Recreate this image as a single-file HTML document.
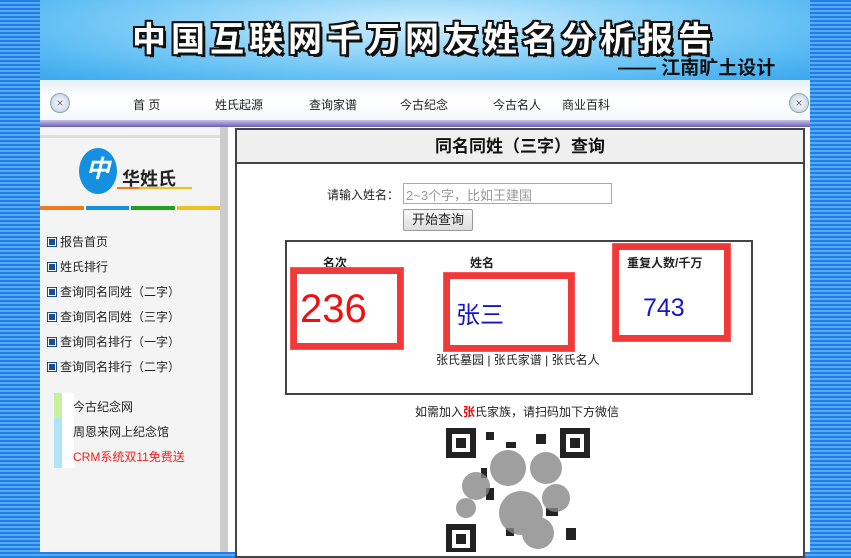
<!DOCTYPE html>
<html><head><meta charset="utf-8"><style>
*{margin:0;padding:0;box-sizing:border-box}
body{width:851px;height:552px;overflow:hidden;position:relative;font-family:"Liberation Sans","Noto Sans CJK SC",sans-serif;font-size:12px;color:#222;
background:repeating-linear-gradient(180deg,#1e7fe6 0 2px,#5aa8f0 2px 4px)}
.a{position:absolute}
#hdr{left:40px;top:0;width:770px;height:80px;background:radial-gradient(ellipse at 50% 30%,#cfeefe,#62c0f4 70%,#3aa7ee)}
#title{left:132px;top:12px;font-size:34px;font-weight:bold;color:#fff;letter-spacing:5px;font-family:"WenQuanYi Zen Hei","Noto Sans CJK SC",sans-serif;
text-shadow:2px 0 #111,-2px 0 #111,0 2px #111,0 -2px #111,2px 2px #111,-2px -2px #111,2px -2px #111,-2px 2px #111,3px 3px #111}
#sub{left:618px;top:53px;font-size:19px;font-weight:bold;color:#111}
#nav{left:40px;top:80px;width:770px;height:42px;background:linear-gradient(#e6eef6,#fff 40%,#f4f7fa)}
#nav span{position:absolute;top:16px;font-size:12px;color:#222}
.x{width:20px;height:20px;border-radius:50%;border:1px solid #8aa;background:radial-gradient(#fff,#b8c8e0);font-size:12px;text-align:center;line-height:18px;color:#668}
#pb{left:40px;top:120px;width:770px;height:7px;background:linear-gradient(#c9c3ea,#6a5fb8)}
#side{left:40px;top:127px;width:180px;height:425px;background:#f4f4f4}
#sb{left:220px;top:127px;width:8px;height:425px;background:#ccc}
#wh{left:228px;top:127px;width:582px;height:425px;background:#fff}
.m{position:absolute;left:48px;font-size:12px;color:#222}
.m b{display:inline-block;width:8px;height:8px;background:#1a4d8f;border:1px solid #fff;outline:1px solid #1a4d8f;margin-right:4px;vertical-align:0}
#main{left:235px;top:128px;width:570px;height:430px;border:2px solid #444;background:#fff}
#mh{left:237px;top:130px;width:566px;height:34px;background:#efefef;border-bottom:2px solid #444;text-align:center;font-size:17px;font-weight:bold;line-height:34px;color:#111}
.rb{position:absolute;border:6px solid #f03a3a;outline:1px solid #f55}
</style></head><body>
<div class="a" id="hdr"></div>
<div class="a" id="title">中国互联网千万网友姓名分析报告</div>
<div class="a" id="sub">—— 江南旷土设计</div>
<div class="a" id="nav">
<div class="a x" style="left:10px;top:13px">×</div><div class="a x" style="left:749px;top:13px">×</div>
<span style="left:93px">首 页</span><span style="left:175px">姓氏起源</span><span style="left:269px">查询家谱</span><span style="left:360px">今古纪念</span><span style="left:453px">今古名人</span><span style="left:522px">商业百科</span>
</div>
<div class="a" style="left:100px;top:121px;width:640px;height:1px;background:#889"></div>
<div class="a" id="pb"></div>
<div class="a" id="side"></div>
<div class="a" style="left:40px;top:135px;width:180px;height:3px;background:#ddd"></div>
<div class="a" id="sb"></div>
<div class="a" id="wh"></div>
<div class="a" style="left:79px;top:148px;width:38px;height:46px;border-radius:50%;background:#1590e0;color:#fff;font-weight:bold;font-style:italic;font-size:24px;text-align:center;line-height:44px">中</div>
<div class="a" style="left:122px;top:165px;font-size:18px;font-weight:bold;color:#222">华姓氏</div>
<div class="a" style="left:117px;top:187px;width:75px;height:2px;background:linear-gradient(90deg,#f07a1a 30%,#f0c020 30%)"></div>
<div class="a" style="left:40px;top:206px;width:44px;height:4px;background:#f07a1a"></div>
<div class="a" style="left:86px;top:206px;width:43px;height:4px;background:#1590e0"></div>
<div class="a" style="left:131px;top:206px;width:44px;height:4px;background:#22a022"></div>
<div class="a" style="left:177px;top:206px;width:43px;height:4px;background:#f0c020"></div>
<div class="m" style="top:233px"><b></b>报告首页</div>
<div class="m" style="top:258px"><b></b>姓氏排行</div>
<div class="m" style="top:283px"><b></b>查询同名同姓（二字）</div>
<div class="m" style="top:308px"><b></b>查询同名同姓（三字）</div>
<div class="m" style="top:333px"><b></b>查询同名排行（一字）</div>
<div class="m" style="top:358px"><b></b>查询同名排行（二字）</div>
<div class="a" style="left:54px;top:393px;width:8px;height:25px;background:#c8f0a0"></div>
<div class="a" style="left:54px;top:418px;width:8px;height:50px;background:#b0e4f8"></div>
<div class="a" style="left:62px;top:393px;width:12px;height:75px;background:#fff"></div>
<div class="a" style="left:73px;top:398px;color:#222">今古纪念网</div>
<div class="a" style="left:73px;top:423px;color:#222">周恩来网上纪念馆</div>
<div class="a" style="left:73px;top:448px;color:#f02020">CRM系统双11免费送</div>
<div class="a" id="main"></div>
<div class="a" id="mh">同名同姓（三字）查询</div>
<div class="a" style="left:327px;top:186px">请输入姓名：</div>
<div class="a" style="left:403px;top:183px;width:209px;height:21px;border:1px solid #aaa;color:#999;font-size:13px;padding:1px 2px">2~3个字，比如王建国</div>
<div class="a" style="left:403px;top:209px;width:70px;height:22px;border:1px solid #999;background:linear-gradient(#f8f8f8,#ddd);font-size:13px;text-align:center;line-height:20px;border-radius:2px">开始查询</div>
<div class="a" style="left:285px;top:240px;width:468px;height:155px;border:2px solid #444"></div>
<div class="a" style="left:323px;top:254px;font-weight:bold;font-size:12px">名次</div>
<div class="a" style="left:470px;top:254px;font-weight:bold;font-size:12px">姓名</div>
<div class="a" style="left:627px;top:254px;font-weight:bold;font-size:12px">重复人数/千万</div>
<div class="rb" style="left:291px;top:268px;width:112px;height:81px"></div>
<div class="rb" style="left:444px;top:273px;width:130px;height:78px"></div>
<div class="rb" style="left:613px;top:244px;width:117px;height:97px"></div>
<div class="a" style="left:300px;top:287px;font-size:40px;color:#f01010">236</div>
<div class="a" style="left:456px;top:295px;font-size:24px;color:#1515cc">张三</div>
<div class="a" style="left:643px;top:294px;font-size:25px;color:#1515cc">743</div>
<div class="a" style="left:436px;top:351px">张氏墓园 | 张氏家谱 | 张氏名人</div>
<div class="a" style="left:415px;top:403px">如需加入<span style="color:#e01010;font-weight:bold">张</span>氏家族，请扫码加下方微信</div>
<div class="a" style="left:446px;top:428px;width:144px;height:124px;background:#fff">
<svg width="144" height="124"><g fill="#222">
<rect x="0" y="0" width="30" height="30"/><rect x="114" y="0" width="30" height="30"/><rect x="0" y="96" width="30" height="28"/>
<rect x="6" y="6" width="18" height="18" fill="#fff"/><rect x="120" y="6" width="18" height="18" fill="#fff"/><rect x="6" y="102" width="18" height="18" fill="#fff"/>
<rect x="10" y="10" width="10" height="10"/><rect x="124" y="10" width="10" height="10"/><rect x="10" y="106" width="10" height="10"/>
<rect x="40" y="4" width="8" height="8"/><rect x="60" y="14" width="10" height="6"/><rect x="90" y="6" width="10" height="10"/><rect x="40" y="60" width="8" height="12"/><rect x="100" y="80" width="12" height="8"/><rect x="120" y="100" width="10" height="12"/><rect x="60" y="100" width="8" height="8"/><rect x="35" y="40" width="6" height="10"/></g>
<g fill="#888" opacity=".8"><circle cx="30" cy="58" r="14"/><circle cx="62" cy="40" r="18"/><circle cx="100" cy="40" r="16"/><circle cx="75" cy="85" r="22"/><circle cx="110" cy="70" r="14"/><circle cx="92" cy="105" r="16"/><circle cx="20" cy="80" r="10"/></g></svg>
</div>
</body></html>
